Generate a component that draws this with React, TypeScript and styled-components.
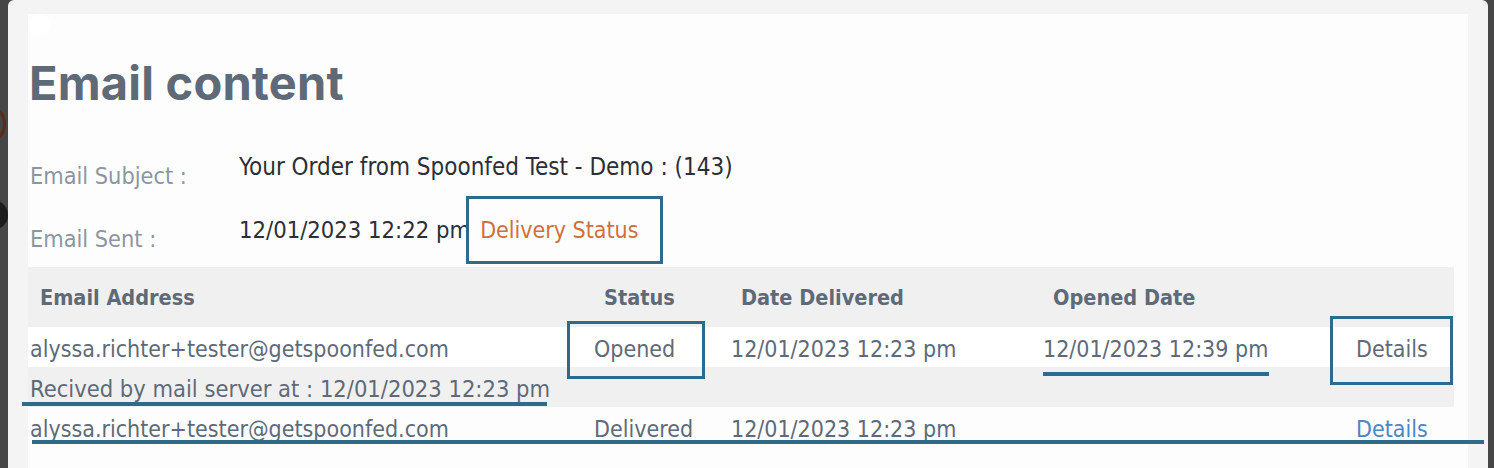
import styled, { createGlobalStyle } from 'styled-components';

const Global = createGlobalStyle`
    html, body {
        margin: 0;
        padding: 0;
        background: #464646;
        overflow: hidden;
    }
`;

const ink = '#5e6a78';
const body = '"DejaVu Sans Condensed", "DejaVu Sans", Verdana, sans-serif';

const Screen = styled.div`
    position: relative;
    width: 1494px;
    height: 468px;
    display: flex;
    padding: 0 6px 0 8px;
    box-sizing: border-box;
    background: #464646;
    overflow: hidden;
    .backdrop-ring {
        position: absolute;
        left: -16px;
        top: 108px;
        width: 16px;
        height: 26px;
        border-radius: 50%;
        border: 3px solid #5e2c14;
    }
    .backdrop-dot {
        position: absolute;
        left: -22px;
        top: 200px;
        width: 30px;
        height: 30px;
        border-radius: 50%;
        background: #1c1c1c;
    }
`;

const Modal = styled.div`
    position: relative;
    z-index: 1;
    flex: 1;
    background: #f4f4f4;
    border-radius: 6px 6px 0 0;
    padding: 14px 20px 0 20px;
    display: flex;
`;

const Panel = styled.div`
    position: relative;
    flex: 1;
    background: #fdfdfd;
    padding: 0 14px 0 0;
    .close-dot {
        position: absolute;
        left: 0;
        top: 0;
        width: 22px;
        height: 22px;
        border-radius: 50%;
        background: #ffffff;
    }
`;

const Title = styled.h1`
    margin: 0;
    padding: 36px 0 0 1px;
    height: 66px;
    font-family: Inter, "Liberation Sans", sans-serif;
    font-weight: 700;
    font-size: 47px;
    line-height: 66px;
    color: ${ink};
    letter-spacing: 0.2px;
`;

const Meta = styled.div`
    display: grid;
    grid-template-columns: 209px 1fr;
    padding: 37px 0 0 2px;
`;

const MetaLabel = styled.div<{ $shift: number }>`
    font: 23.3px ${body};
    color: #8b96a2;
    padding-top: ${(p) => p.$shift}px;
    height: 63px;
    box-sizing: border-box;
`;

const MetaValue = styled.div<{ $size: number }>`
    font: ${(p) => p.$size}px ${body};
    color: #2c2f36;
    height: 63px;
    display: flex;
    align-items: flex-start;
    gap: 10px;
    .status-link {
        color: #d0703a;
        font-size: 23px;
        padding-top: 1px;
    }
`;

const Table = styled.div`
    background: #f0f0f0;
    margin-top: -12px;
`;

const Row = styled.div<{ $bg: string; $h: number }>`
    display: grid;
    grid-template-columns: 564px 137px 312px 313px 100px;
    height: ${(p) => p.$h}px;
    align-items: center;
    background: ${(p) => p.$bg};
`;

const Head = styled.div`
    padding-left: 12px;
    font: bold 21.5px ${body};
    color: ${ink};
`;

const Cell = styled.div<{ $tone?: string }>`
    padding-left: 2px;
    padding-top: 3px;
    font: 23px ${body};
    color: ${(p) => p.$tone || ink};
    white-space: nowrap;
`;

const Note = styled.div`
    height: 40px;
    display: flex;
    align-items: center;
    padding: 3px 0 0 2px;
    box-sizing: border-box;
    font: 23.5px ${body};
    color: ${ink};
    white-space: nowrap;
`;

const Mark = styled.div<{ $x: number; $y: number; $w: number; $h: number }>`
    position: absolute;
    z-index: 5;
    left: ${(p) => p.$x}px;
    top: ${(p) => p.$y}px;
    width: ${(p) => p.$w}px;
    height: ${(p) => p.$h}px;
    box-sizing: border-box;
    border: 3px solid #2e6b8a;
    pointer-events: none;
`;

const Line = styled.div<{ $x: number; $y: number; $w: number }>`
    position: absolute;
    z-index: 5;
    left: ${(p) => p.$x}px;
    top: ${(p) => p.$y}px;
    width: ${(p) => p.$w}px;
    height: 4px;
    background: #2e6b8a;
`;

export default function App() {
    return (
        <Screen>
            <Global />
            <span className="backdrop-ring" />
            <span className="backdrop-dot" />
            <Modal>
                <Panel>
                    <span className="close-dot" />
                    <Title>Email content</Title>
                    <Meta>
                        <MetaLabel $shift={9}>Email Subject :</MetaLabel>
                        <MetaValue $size={24}>Your Order from Spoonfed Test - Demo : (143)</MetaValue>
                        <MetaLabel $shift={9}>Email Sent :</MetaLabel>
                        <MetaValue $size={23.6}>
                            12/01/2023 12:22 pm<span className="status-link">Delivery Status</span>
                        </MetaValue>
                    </Meta>
                    <Table>
                        <Row $bg="#f0f0f0" $h={60}>
                            <Head>Email Address</Head>
                            <Head>Status</Head>
                            <Head>Date Delivered</Head>
                            <Head>Opened Date</Head>
                            <Head />
                        </Row>
                        <Row $bg="#ffffff" $h={40}>
                            <Cell>alyssa.richter+tester@getspoonfed.com</Cell>
                            <Cell>Opened</Cell>
                            <Cell>12/01/2023 12:23 pm</Cell>
                            <Cell>12/01/2023 12:39 pm</Cell>
                            <Cell>Details</Cell>
                        </Row>
                        <Note>Recived by mail server at : 12/01/2023 12:23 pm</Note>
                        <Row $bg="#fdfdfd" $h={40}>
                            <Cell>alyssa.richter+tester@getspoonfed.com</Cell>
                            <Cell>Delivered</Cell>
                            <Cell>12/01/2023 12:23 pm</Cell>
                            <Cell />
                            <Cell $tone="#4a86c8">Details</Cell>
                        </Row>
                    </Table>
                </Panel>
            </Modal>
            <Mark $x={466} $y={196} $w={197} $h={68} />
            <Mark $x={567} $y={321} $w={138} $h={58} />
            <Mark $x={1330} $y={316} $w={123} $h={69} />
            <Line $x={1043} $y={372} $w={226} />
            <Line $x={22} $y={402} $w={525} />
            <Line $x={32} $y={440} $w={1452} />
        </Screen>
    );
}
